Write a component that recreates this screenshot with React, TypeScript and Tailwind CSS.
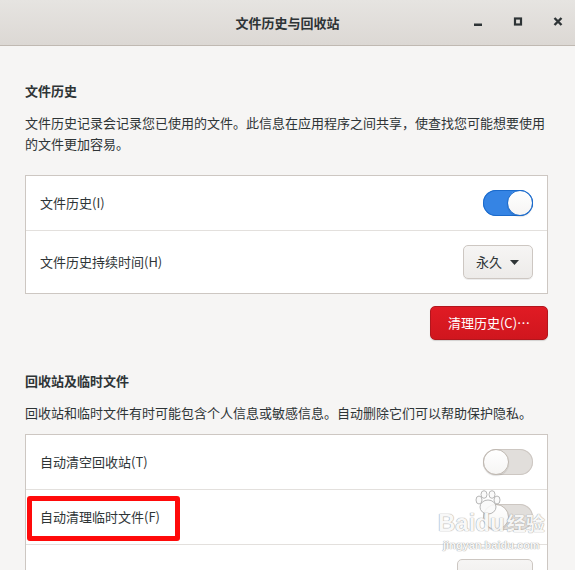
import React from "react";

type ToggleProps = {
  on: boolean;
};

function Toggle({ on }: ToggleProps) {
  return (
    <div
      className={`flex h-[26px] w-[50px] items-center rounded-full ${
        on
          ? "justify-end bg-[#3584e4] shadow-[inset_0_0_0_1px_#1b6acb]"
          : "justify-start bg-[#e1dedb] shadow-[inset_0_0_0_1px_#cdc7c2]"
      }`}
    >
      <div
        className={`h-[26px] w-[26px] rounded-full border bg-gradient-to-b from-white to-[#f6f5f4] shadow-[0_1px_1px_rgba(0,0,0,0.12)] ${
          on ? "border-[#1b6acb]" : "border-[#bfb8b1]"
        }`}
      />
    </div>
  );
}

function Dropdown({ label, width }: { label?: string; width: string }) {
  return (
    <div
      className={`flex h-[34px] ${width} items-center justify-between rounded-[5px] border border-[#cdc7c2] bg-gradient-to-b from-[#f6f5f4] to-[#edebe9] pl-[12px] pr-[13px] text-[13px] text-[#2e3436] shadow-[0_1px_0_rgba(0,0,0,0.07)]`}
    >
      {label && (
        <>
          <span>{label}</span>
          <svg width="9" height="5" viewBox="0 0 9 5">
            <path d="M0 0 L9 0 L4.5 5 Z" fill="#2e3436" />
          </svg>
        </>
      )}
    </div>
  );
}

function Row({
  label,
  children,
  first,
  extra,
}: {
  label?: string;
  children: React.ReactNode;
  first?: boolean;
  extra?: React.ReactNode;
}) {
  return (
    <div
      className={`relative flex items-center justify-between px-[14px] py-[14px] ${
        first ? "" : "border-t border-[#e3e0dd]"
      }`}
    >
      <span className="text-[13px] text-[#2e3436]">{label}</span>
      {children}
      {extra}
    </div>
  );
}

export default function App() {
  return (
    <div className="relative h-[570px] w-[575px] overflow-hidden bg-[#f6f5f4] font-['Noto_Sans_CJK_SC','Noto_Sans',sans-serif] text-[#2e3436]">
      {/* header bar */}
      <div className="grid h-[46px] grid-cols-[1fr_auto_1fr] items-center border-b border-[#c0b9b2] bg-gradient-to-b from-[#e6e4e1] to-[#dcd8d4]">
        <div />
        <div className="text-[13px] font-bold text-[#2e3436]">文件历史与回收站</div>
        <div className="flex items-center justify-end gap-[24px] pr-[9px]">
          <svg width="16" height="16" viewBox="0 0 16 16">
            <rect x="4" y="8.5" width="8" height="2.5" fill="#2e3436" />
          </svg>
          <svg width="16" height="16" viewBox="0 0 16 16">
            <rect x="5" y="3.5" width="6" height="6" fill="none" stroke="#2e3436" strokeWidth="2.2" />
          </svg>
          <svg width="16" height="16" viewBox="0 0 16 16">
            <path d="M4.5 3 L11.5 10 M11.5 3 L4.5 10" stroke="#2e3436" strokeWidth="2.4" />
          </svg>
        </div>
      </div>

      <div className="flex flex-col pl-[25px] pr-[27px] pt-[36px]">
        {/* file history */}
        <h2 className="text-[13px] font-bold leading-[18px]">文件历史</h2>
        <p className="mt-[12px] text-[13px] leading-[21px]">
          <span className="block whitespace-nowrap">
            文件历史记录会记录您已使用的文件。此信息在应用程序之间共享，使查找您可能想要使用
          </span>
          <span className="block whitespace-nowrap">的文件更加容易。</span>
        </p>
        <div className="mt-[21px] border border-[#cdc7c2] bg-white">
          <Row label="文件历史(I)" first>
            <Toggle on />
          </Row>
          <Row label="文件历史持续时间(H)">
            <Dropdown label="永久" width="w-[70px]" />
          </Row>
        </div>
        <div className="mt-[12px] flex justify-end">
          <button className="h-[34px] w-[118px] rounded-[5px] border border-[#b2161d] bg-gradient-to-b from-[#e01b24] to-[#d0161e] text-[13px] text-white shadow-[0_1px_1px_rgba(0,0,0,0.15)]">
            清理历史(C)…
          </button>
        </div>

        {/* trash & temp files */}
        <h2 className="mt-[32px] text-[13px] font-bold leading-[18px]">回收站及临时文件</h2>
        <p className="mt-[12px] whitespace-nowrap text-[13px] leading-[21px]">
          回收站和临时文件有时可能包含个人信息或敏感信息。自动删除它们可以帮助保护隐私。
        </p>
        <div className="mt-[11px] border border-[#cdc7c2] bg-white">
          <Row label="自动清空回收站(T)" first>
            <Toggle on={false} />
          </Row>
          <Row
            label="自动清理临时文件(F)"
            extra={
              <div className="absolute left-[1px] top-[6px] h-[45px] w-[153px] rounded-[3px] border-[5px] border-[#ff0a0a]" />
            }
          >
            <Toggle on={false} />
          </Row>
          <Row>
            <Dropdown width="w-[76px]" />
          </Row>
        </div>
      </div>

      {/* baidu watermark */}
      <div className="pointer-events-none absolute left-[438px] top-[513px] flex flex-col items-center opacity-90">
        <div className="flex items-end font-['Liberation_Sans',sans-serif] text-[24px] font-bold leading-[20px] text-[#f8f8f8] [text-shadow:0_0_1px_#9a9a9a,0_0_1px_#9a9a9a]">
          <span>Bai</span>
          <span className="relative">
            <svg className="absolute left-[-2px] top-[-23px]" width="30" height="26" viewBox="0 0 30 26">
              <g fill="#fafafa" stroke="#b0b0b0" strokeWidth="1">
                <ellipse cx="15" cy="17" rx="8" ry="7" />
                <ellipse cx="6" cy="10" rx="3" ry="4" />
                <ellipse cx="11" cy="4.5" rx="3" ry="3.8" />
                <ellipse cx="19" cy="4.5" rx="3" ry="3.8" />
                <ellipse cx="24" cy="10" rx="3" ry="4" />
              </g>
            </svg>
            <span className="relative">du</span>
          </span>
          <span className="ml-[2px] font-['Noto_Sans_CJK_SC',sans-serif] text-[19px]">经验</span>
        </div>
        <div className="mt-[6px] font-['Liberation_Sans',sans-serif] text-[11px] font-bold leading-[12px] text-[#f8f8f8] [text-shadow:0_0_1px_#9a9a9a,0_0_1px_#9a9a9a]">
          jingyan.baidu.com
        </div>
      </div>
    </div>
  );
}
